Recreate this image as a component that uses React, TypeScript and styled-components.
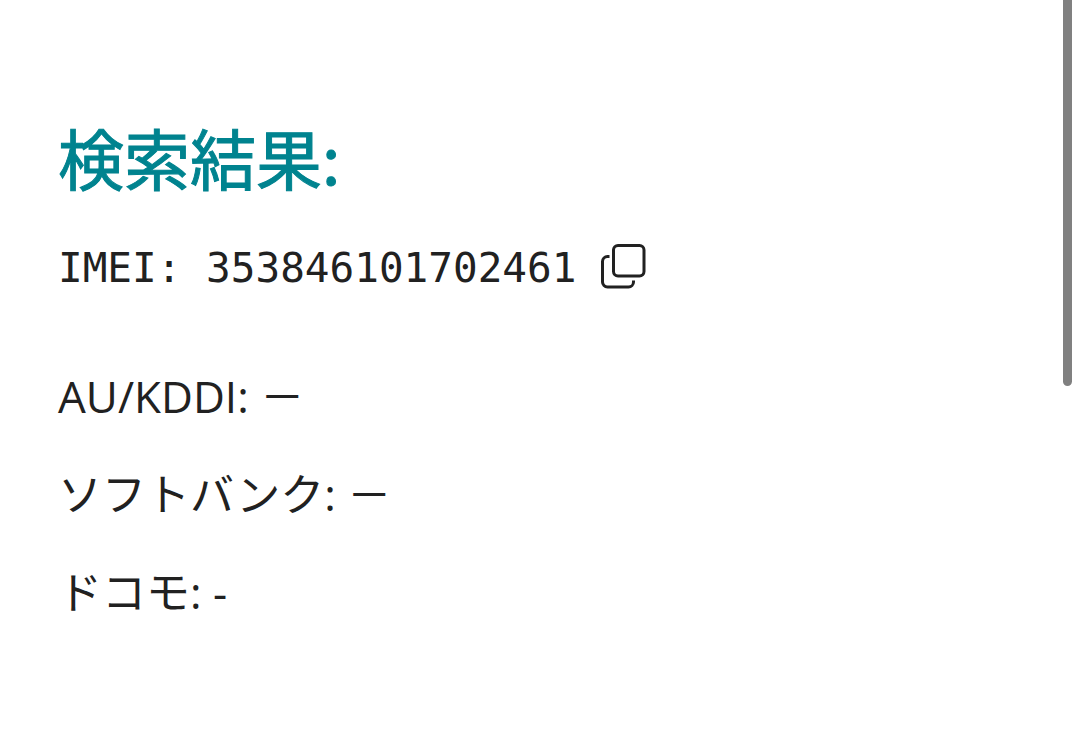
import React from 'react';
import styled, { createGlobalStyle } from 'styled-components';

const GlobalStyle = createGlobalStyle`
  * { box-sizing: border-box; }
  body {
    margin: 0;
    background: #fff;
    color: #212121;
    font-family: "Open Sans", "Noto Sans CJK JP", sans-serif;
  }
`;

const Page = styled.div`
  display: flex;
  justify-content: space-between;
  gap: 24px;
  min-height: 100vh;
  padding-right: 8px;
`;

const Results = styled.main`
  flex: 1;
  padding: 108px 0 96px 58px;
`;

const Title = styled.h1`
  margin: 0;
  font-family: "Noto Sans CJK JP", sans-serif;
  font-size: 66px;
  line-height: 96px;
  font-weight: 400;
  color: #00838f;
  -webkit-text-stroke: 1px currentColor;
`;

const ImeiRow = styled.div`
  display: flex;
  align-items: center;
  gap: 25px;
  margin-top: 30px;
`;

const Imei = styled.p`
  margin: 0;
  padding-top: 2px;
  font-family: "DejaVu Sans Mono", monospace;
  font-size: 41px;
  line-height: 64px;
`;

const CopyButton = styled.button`
  display: flex;
  padding: 0;
  border: 0;
  background: none;
  color: inherit;
  cursor: pointer;
`;

const Carriers = styled.ul`
  display: flex;
  flex-direction: column;
  gap: 34px;
  margin: 64px 0 0;
  padding: 0;
  list-style: none;
`;

const Carrier = styled.li`
  font-size: 44px;
  line-height: 64px;
`;

const ScrollThumb = styled.div`
  width: 9px;
  height: 51vh;
  border-radius: 0 0 5px 5px;
  background: #808080;
`;

const carriers = [
  { name: 'AU/KDDI', status: '－' },
  { name: 'ソフトバンク', status: '－' },
  { name: 'ドコモ', status: '-' },
];

export default function App() {
  return (
    <>
      <GlobalStyle />
      <Page>
        <Results>
          <Title>検索結果:</Title>
          <ImeiRow>
            <Imei>IMEI: 353846101702461</Imei>
            <CopyButton type="button" aria-label="コピー">
              <svg width="46" height="46" viewBox="0 0 46 46" fill="none" stroke="currentColor" strokeWidth="3">
                <rect x="12.500" y="1.500" width="30.500" height="30.500" rx="4.500" />
                <path d="M8.500 12.500H6.500a5 5 0 0 0-5 5V38a5 5 0 0 0 5 5H27.500a5 5 0 0 0 5-5V36.500" />
              </svg>
            </CopyButton>
          </ImeiRow>
          <Carriers>
            {carriers.map(({ name, status }) => (
              <Carrier key={name}>{name}: {status}</Carrier>
            ))}
          </Carriers>
        </Results>
        <ScrollThumb />
      </Page>
    </>
  );
}
